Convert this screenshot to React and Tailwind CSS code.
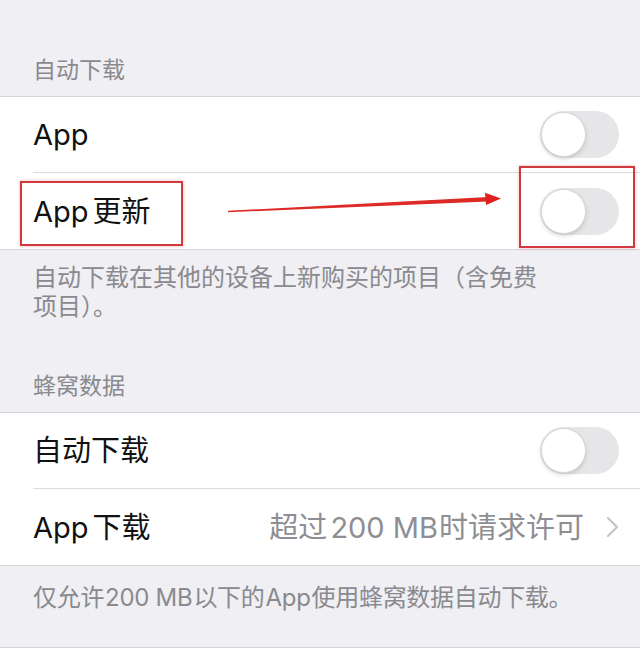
import React from "react";

const Toggle = () => (
    <div className="relative w-[79px] h-[47px] rounded-full bg-[#e6e6e8] shrink-0">
        <div className="absolute left-[1px] top-[1px] w-[45px] h-[45px] rounded-full bg-white border border-[#d8d8db] shadow-[0_2px_4px_rgba(0,0,0,0.15)]" />
    </div>
);

const Row = ({ label, last, children }) => (
    <div className="pl-[33px] bg-white">
        <div
            className={`h-[76px] flex items-center justify-between pr-[21px] ${
                last ? "" : "border-b border-[#dcdce0]"
            }`}
        >
            <span className="text-[29px] text-[#111] leading-none">{label}</span>
            {children}
        </div>
    </div>
);

const Header = ({ children, className }) => (
    <div className={`px-[33px] pb-[12px] text-[23px] leading-[28px] text-[#8a8a8e] ${className}`}>
        {children}
    </div>
);

const Value = ({ children }) => (
    <div className="flex items-center gap-[22px] text-[29px] text-[#8e8e93] leading-none">
        <span>{children}</span>
        <svg width="13" height="22" viewBox="0 0 13 22" fill="none">
            <path d="M2 2l9 9-9 9" stroke="#c4c4c8" strokeWidth="2.2" strokeLinecap="round" strokeLinejoin="round" />
        </svg>
    </div>
);

export default function App() {
    return (
        <div
            className="relative w-[640px] h-[668px] overflow-hidden bg-[#efeff4]"
            style={{ fontFamily: 'Inter, "Noto Sans CJK SC", sans-serif' }}
        >
            <Header className="pt-[56px]">自动下载</Header>
            <div className="border-y border-[#d6d6da]">
                <Row label="App">
                    <Toggle />
                </Row>
                <Row label={<>App<span className="ml-[4px]">更新</span></>} last>
                    <Toggle />
                </Row>
            </div>
            <p className="px-[33px] pt-[13px] text-[24px] leading-[29px] text-[#8a8a8e]">
                自动下载在其他的设备上新购买的项目（含免费
                <br />
                项目）。
            </p>

            <Header className="pt-[51px]">蜂窝数据</Header>
            <div className="border-y border-[#d6d6da]">
                <Row label="自动下载">
                    <Toggle />
                </Row>
                <Row label={<>App<span className="ml-[4px]">下载</span></>} last>
                    <Value>
                        超过<span className="ml-[3px]">200 MB</span>
                        <span className="ml-[1px]">时请求许可</span>
                    </Value>
                </Row>
            </div>
            <p className="px-[33px] pt-[17px] mb-[35px] text-[24px] leading-[29px] tracking-[-0.3px] text-[#8a8a8e]">
                仅允许<span className="ml-[1px]">200 MB</span>
                <span className="ml-[1px]">以下的</span>
                <span className="ml-[1px]">App</span>
                <span className="ml-[1px]">使用蜂窝数据自动下载。</span>
            </p>

            <div className="border-t border-[#d6d6da]">
                <Row label="视频自动播放" last>
                    <Value>开</Value>
                </Row>
            </div>

            {/* annotation overlay */}
            <div className="absolute left-[20px] top-[181px] w-[163px] h-[65px] border-2 border-[#cf3a3e] shadow-[0_0_3px_rgba(220,60,60,0.4)]" />
            <div className="absolute left-[519px] top-[166px] w-[116px] h-[82px] border-2 border-[#cf3a3e] shadow-[0_0_3px_rgba(220,60,60,0.4)]" />
            <svg className="absolute left-0 top-0" width="640" height="668" viewBox="0 0 640 668">
                <polygon points="228,210.8 488,197 488,201.6 228,212.2" fill="#de2a26" />
                <polygon points="485,192.8 501,198.6 486,205" fill="#e0201f" />
            </svg>
        </div>
    );
}
